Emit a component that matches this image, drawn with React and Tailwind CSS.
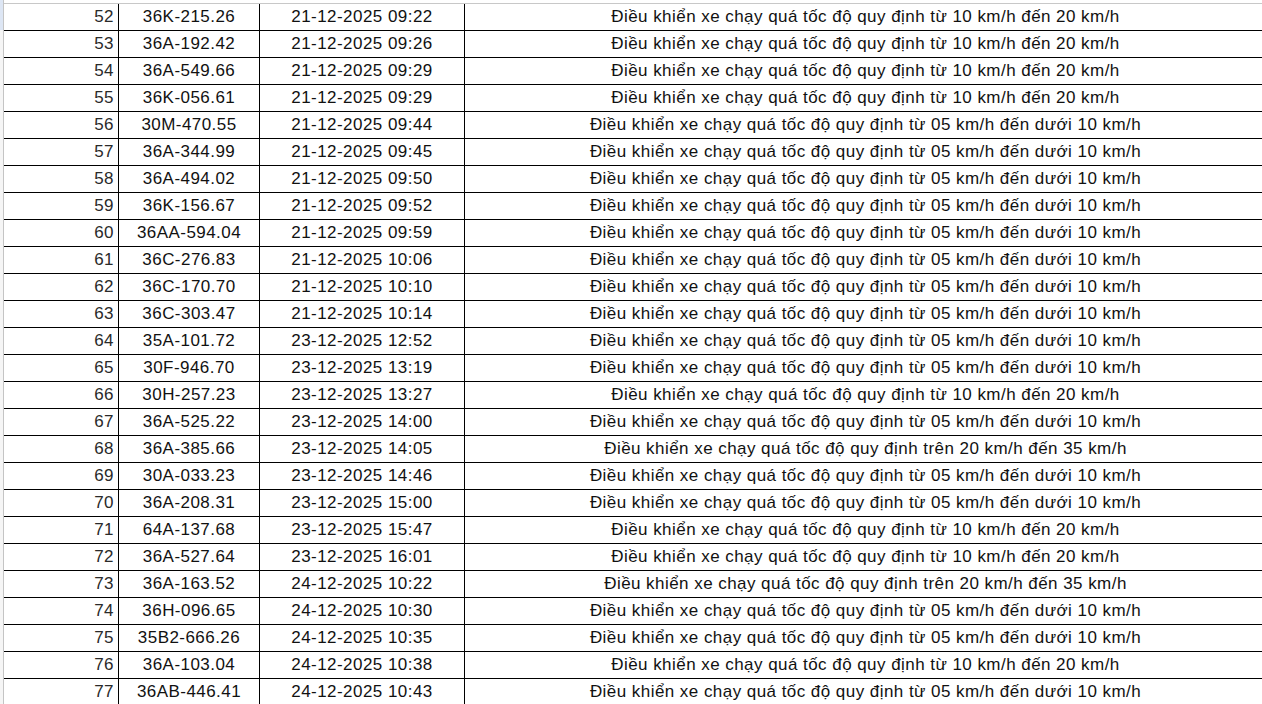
const A = "Điều khiển xe chạy quá tốc độ quy định từ 10 km/h đến 20 km/h";
const B = "Điều khiển xe chạy quá tốc độ quy định từ 05 km/h đến dưới 10 km/h";
const C = "Điều khiển xe chạy quá tốc độ quy định trên 20 km/h đến 35 km/h";

const rows = [
  [52, "36K-215.26", "21-12-2025 09:22", A],
  [53, "36A-192.42", "21-12-2025 09:26", A],
  [54, "36A-549.66", "21-12-2025 09:29", A],
  [55, "36K-056.61", "21-12-2025 09:29", A],
  [56, "30M-470.55", "21-12-2025 09:44", B],
  [57, "36A-344.99", "21-12-2025 09:45", B],
  [58, "36A-494.02", "21-12-2025 09:50", B],
  [59, "36K-156.67", "21-12-2025 09:52", B],
  [60, "36AA-594.04", "21-12-2025 09:59", B],
  [61, "36C-276.83", "21-12-2025 10:06", B],
  [62, "36C-170.70", "21-12-2025 10:10", B],
  [63, "36C-303.47", "21-12-2025 10:14", B],
  [64, "35A-101.72", "23-12-2025 12:52", B],
  [65, "30F-946.70", "23-12-2025 13:19", B],
  [66, "30H-257.23", "23-12-2025 13:27", A],
  [67, "36A-525.22", "23-12-2025 14:00", B],
  [68, "36A-385.66", "23-12-2025 14:05", C],
  [69, "30A-033.23", "23-12-2025 14:46", B],
  [70, "36A-208.31", "23-12-2025 15:00", B],
  [71, "64A-137.68", "23-12-2025 15:47", A],
  [72, "36A-527.64", "23-12-2025 16:01", A],
  [73, "36A-163.52", "24-12-2025 10:22", C],
  [74, "36H-096.65", "24-12-2025 10:30", B],
  [75, "35B2-666.26", "24-12-2025 10:35", B],
  [76, "36A-103.04", "24-12-2025 10:38", A],
  [77, "36AB-446.41", "24-12-2025 10:43", B],
];

export default function App() {
  return (
    <div
      className="w-[1262px] h-[704px] overflow-hidden bg-white text-[17px] tracking-[0.45px] text-[#111]"
      style={{ fontFamily: '"Liberation Sans", Arial, sans-serif' }}
    >
      <div className="flex w-[1270px]">
        <div className="w-[4px] shrink-0 flex flex-col border-r border-[#c4c4c4]">
          <div className="h-[30px] bg-[#dde6f4]" />
          <div className="flex-1 bg-[#f5f5f5]" />
        </div>
        <div className="flex-1">
          <div className="h-[3px]" />
          <div className="border-t border-[#c8c8c8]">
            {rows.map(([n, plate, time, desc]) => (
              <div key={n} className="flex h-[27px] border-b border-black leading-[26px]">
                <div className="w-[115px] shrink-0 border-r border-black text-right pr-[4px] text-[#2a2a2a]">
                  {n}
                </div>
                <div className="w-[141px] shrink-0 border-r border-black text-center">
                  {plate}
                </div>
                <div className="w-[205px] shrink-0 border-r border-black text-center">
                  {time}
                </div>
                <div className="w-[801px] shrink-0 text-center whitespace-nowrap">
                  {desc}
                </div>
              </div>
            ))}
          </div>
        </div>
      </div>
    </div>
  );
}
